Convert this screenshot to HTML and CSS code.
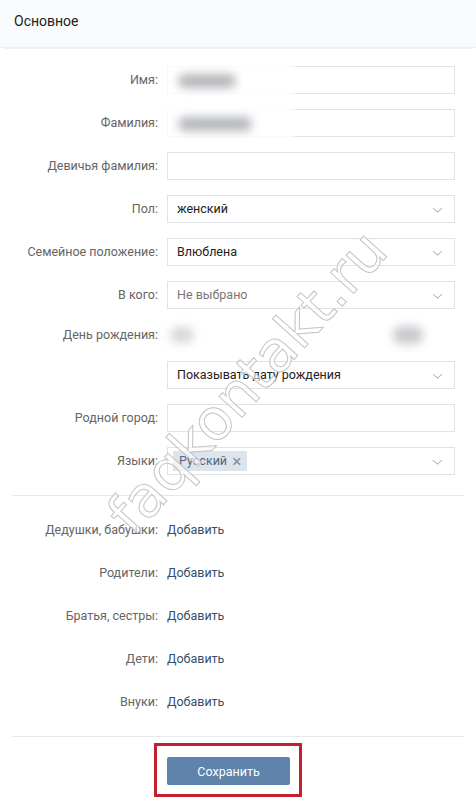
FILE: index.html
```html
<!DOCTYPE html>
<html lang="ru">

<head>
    <meta charset="UTF-8">
    <meta name="viewport" content="width=device-width, initial-scale=1.0">
    <title>Основное</title>
    <link rel="stylesheet" href="styles.css">
</head>

<body>
    <div class="page">
        <!-- заголовок -->
        <div class="head">Основное</div>

        <div class="form">
            <label class="lbl">Имя:</label>
            <div class="field"><span class="blob blob-name"></span></div>

            <label class="lbl">Фамилия:</label>
            <div class="field"><span class="blob blob-surname"></span></div>

            <label class="lbl">Девичья фамилия:</label>
            <div class="field"></div>

            <label class="lbl">Пол:</label>
            <div class="field select">женский<i class="chev"></i></div>

            <label class="lbl">Семейное положение:</label>
            <div class="field select">Влюблена<i class="chev"></i></div>

            <label class="lbl">В кого:</label>
            <div class="field select muted">Не выбрано<i class="chev"></i></div>

            <label class="lbl short">День рождения:</label>
            <div class="birth">
                <span class="blob blob-day"></span>
                <span class="blob blob-year"></span>
            </div>

            <span></span>
            <div class="field select">Показывать дату рождения<i class="chev"></i></div>

            <label class="lbl">Родной город:</label>
            <div class="field"></div>

            <label class="lbl">Языки:</label>
            <div class="field select"><span class="tag">Русский <b>×</b></span><i class="chev"></i></div>
        </div>

        <div class="sep"></div>

        <div class="form rel">
            <span class="lbl">Дедушки, бабушки:</span><a href="#" class="add">Добавить</a>
            <span class="lbl">Родители:</span><a href="#" class="add">Добавить</a>
            <span class="lbl">Братья, сестры:</span><a href="#" class="add">Добавить</a>
            <span class="lbl">Дети:</span><a href="#" class="add">Добавить</a>
            <span class="lbl">Внуки:</span><a href="#" class="add">Добавить</a>
        </div>

        <div class="sep"></div>

        <div class="frame">
            <button class="save">Сохранить</button>
        </div>

        <!-- скрытое имя -->
        <div class="hide"></div>
        <!-- водяной знак -->
        <div class="mark">faqkontakt.ru</div>
    </div>
</body>

</html>
```

FILE: styles.css
```css
* {
    margin: 0;
    padding: 0;
    box-sizing: border-box;
}

body {
    font-family: Roboto, "Liberation Sans", sans-serif;
    font-size: 12.5px;
    color: #222;
    background-color: #fff;
}

.page {
    width: 476px;
    height: 800px;
    position: relative;
    overflow: hidden;
}

.head {
    height: 48px;
    padding-left: 14px;
    line-height: 42px;
    font-size: 14px;
    color: #222;
    background-color: #fafbfc;
    border-bottom: 1px solid #eceef1;
    box-shadow: 0 5px 0 -4px #f0f1f3;
}

.form {
    display: grid;
    grid-template-columns: 158px 288px;
    column-gap: 9px;
    row-gap: 15px;
    padding-top: 18px;
}

.form.rel {
    padding: 20px 0;
    row-gap: 15px;
}

.lbl {
    text-align: right;
    color: #656565;
    line-height: 28px;
    white-space: nowrap;
}

.lbl.short {
    line-height: 22px;
}

.field {
    height: 28px;
    border: 1px solid #dfe2e6;
    padding: 0 9px;
    line-height: 26px;
    position: relative;
    color: #222;
}

.field.muted {
    color: #777;
}

.chev {
    position: absolute;
    right: 13px;
    top: 9px;
    width: 7px;
    height: 7px;
    border-right: 1.3px solid #a4acb5;
    border-bottom: 1.3px solid #a4acb5;
    transform: scaleY(0.8) rotate(45deg);
}

.birth {
    height: 22px;
    position: relative;
}

.blob {
    position: absolute;
    display: block;
    z-index: 2;
    background-color: #b4b7bb;
    border-radius: 8px;
    filter: blur(5px);
}

.blob-name {
    left: 10px;
    top: 7px;
    width: 58px;
    height: 14px;
}

.blob-surname {
    left: 10px;
    top: 7px;
    width: 74px;
    height: 14px;
}

.blob-day {
    left: 3px;
    top: 3px;
    width: 24px;
    height: 16px;
    background-color: #d6d8db;
}

.blob-year {
    left: 226px;
    top: 2px;
    width: 30px;
    height: 18px;
    background-color: #c8cacd;
}

.tag {
    display: inline-block;
    margin-left: -4px;
    margin-top: 3px;
    height: 20px;
    line-height: 20px;
    padding: 0 6px;
    background-color: #dde4ec;
    color: #55677d;
    vertical-align: top;
}

.tag b {
    font-weight: normal;
    font-size: 17px;
    color: #7d8ea3;
    margin-left: 2px;
    vertical-align: top;
}

.sep {
    height: 1px;
    margin: 20px 12px 0;
    background-color: #e7e8ec;
}

.form.rel + .sep {
    margin-top: 0;
}

.add {
    color: #34506e;
    text-decoration: none;
    line-height: 28px;
}

.frame {
    margin: 6px 0 0 154px;
    width: 148px;
    height: 54px;
    border: 3px solid #c41f2e;
    padding: 11px 0 0 10px;
}

.save {
    width: 123px;
    height: 28px;
    border: none;
    border-radius: 2px;
    background-color: #5f83aa;
    color: #fff;
    font-family: Roboto, "Liberation Sans", sans-serif;
    font-size: 12.5px;
    display: block;
}

.hide {
    position: absolute;
    z-index: 1;
    left: 164px;
    top: 58px;
    width: 130px;
    height: 84px;
    background: rgba(255, 255, 255, 0.85);
    filter: blur(3px);
    pointer-events: none;
}

.mark {
    position: absolute;
    z-index: 3;
    left: 247px;
    top: 382px;
    transform: translate(-50%, -50%) rotate(-48deg);
    font-family: "DejaVu Sans", sans-serif;
    font-size: 57px;
    white-space: nowrap;
    color: rgba(255, 255, 255, 0.55);
    -webkit-text-stroke: 1px #c4c4c4;
    pointer-events: none;
}
```
